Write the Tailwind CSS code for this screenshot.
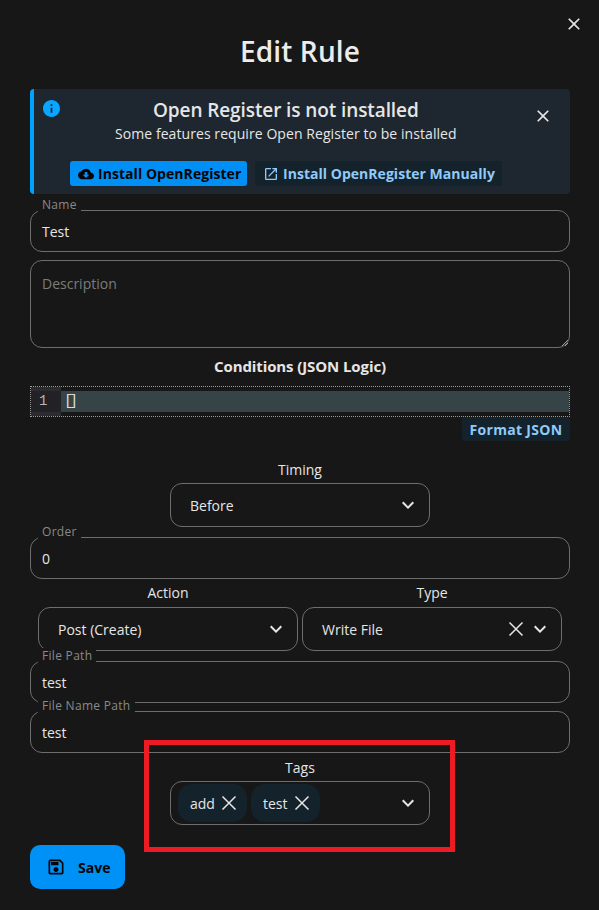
<!DOCTYPE html>
<html lang="en">
<head>
    <meta charset="UTF-8">
    <meta name="viewport" content="width=device-width, initial-scale=1.0">
    <title>Edit Rule</title>
    <script src="https://cdn.jsdelivr.net/npm/@tailwindcss/browser@4"></script>
</head>
<body class="bg-[#171717] text-[#e6e6e6] font-['Open_Sans',sans-serif] text-[14px]">
    <div class="relative w-[599px] h-[910px] overflow-hidden pl-[30px] pr-[29px]">
        <!-- dialog close -->
        <svg class="absolute left-[564px] top-[14px] w-[20px] h-[20px]" viewBox="0 0 24 24" fill="#e6e6e6"><path d="M19 6.41 17.59 5 12 10.59 6.41 5 5 6.41 10.59 12 5 17.59 6.41 19 12 13.41 17.59 19 19 17.59 13.41 12z"/></svg>

        <h1 class="h-[89px] pt-[30px] text-center text-[28px] leading-[42px] font-semibold text-[#ececec] tracking-[0.15px]">Edit Rule</h1>

        <!-- notice -->
        <div class="relative h-[105px] rounded-[4px] bg-[#1e2730] border-l-[4px] border-[#00a2ff]">
            <svg class="absolute left-[9px] top-[11px] w-[17px] h-[17px]" viewBox="2 2 20 20" fill="#0aa5ff"><path d="M12 2C6.48 2 2 6.48 2 12s4.48 10 10 10 10-4.48 10-10S17.52 2 12 2zm1 15h-2v-6h2v6zm0-8h-2V7h2v2z"/></svg>
            <div class="absolute left-[119px] top-[9px] text-[19px] leading-[24px] font-semibold text-[#e6e6e6] tracking-[-0.1px]">Open Register is not installed</div>
            <div class="absolute left-[81px] top-[35px] text-[14px] leading-[20px] tracking-[0.07px]">Some features require Open Register to be installed</div>
            <svg class="absolute left-[499px] top-[17px] w-[20px] h-[20px]" viewBox="0 0 24 24" fill="#e6e6e6"><path d="M19 6.41 17.59 5 12 10.59 6.41 5 5 6.41 10.59 12 5 17.59 6.41 19 12 13.41 17.59 19 19 17.59 13.41 12z"/></svg>
            <div class="absolute left-[36px] top-[72px] flex gap-[8px]">
                <div class="flex items-center h-[25px] w-[177px] pl-[8px] gap-[4px] rounded-[3px] bg-[#008ff5] text-[#050505] font-bold tracking-[0.05px]">
                    <svg class="w-[16px] h-[16px]" viewBox="0 0 24 24" fill="#050505"><path d="M19.35 10.04C18.67 6.59 15.64 4 12 4 9.11 4 6.6 5.64 5.35 8.04 2.34 8.36 0 10.91 0 14c0 3.31 2.69 6 6 6h13c2.76 0 5-2.24 5-5 0-2.64-2.05-4.78-4.65-4.96zM17 13l-5 5-5-5h3V9h4v4h3z"/></svg>
                    Install OpenRegister
                </div>
                <div class="flex items-center h-[25px] w-[247px] pl-[8px] gap-[4px] rounded-[3px] bg-[#14222c] text-[#90caf9] font-bold tracking-[0.03px]">
                    <svg class="w-[16px] h-[16px]" viewBox="0 0 24 24" fill="#90caf9"><path d="M19 19H5V5h7V3H5c-1.11 0-2 .9-2 2v14c0 1.1.89 2 2 2h14c1.1 0 2-.9 2-2v-7h-2v7zM14 3v2h3.59l-9.83 9.83 1.41 1.41L19 6.41V10h2V3h-7z"/></svg>
                    Install OpenRegister Manually
                </div>
            </div>
        </div>

        <!-- name -->
        <div class="relative mt-[16px] h-[42px] rounded-[12px] border border-[#6e6e6e] pl-[11px] flex items-center">
            <span class="absolute left-[7px] top-[-14px] px-[4px] bg-[#171717] text-[12px] leading-[16px] text-[#8a8a8a] tracking-[0.3px]">Name</span>
            Test
        </div>

        <!-- description -->
        <div class="relative mt-[8px] h-[88px] rounded-[12px] border border-[#6e6e6e] pl-[11px] pt-[13px] leading-[20px] text-[#7c7c7c]">
            Description
            <svg class="absolute right-[1px] bottom-[1px] w-[6px] h-[6px]" viewBox="0 0 6 6" stroke="#a0a0a0" fill="none"><path d="M0 6 6 0M3 6 6 3"/></svg>
        </div>

        <div class="mt-[8px] h-[20px] text-center text-[15px] font-bold leading-[20px] tracking-[-0.1px]">Conditions (JSON Logic)</div>

        <!-- editor -->
        <div class="mt-[10px] h-[31px] border border-dotted border-[#9a9a9a] flex">
            <div class="w-[30px] bg-[#2b2b30] flex flex-col">
                <div class="h-[4px]"></div>
                <div class="h-[21px] bg-[#212126] text-[#b8b8b8] font-['Liberation_Mono',monospace] text-[14px] leading-[21px] pl-[8px]">1</div>
            </div>
            <div class="flex-1 flex flex-col">
                <div class="mt-[4px] h-[21px] bg-[#364448] pl-[3px] text-[#dcdcdc] font-['Liberation_Mono',monospace] text-[15px] leading-[21px] tracking-[-4px]">[]</div>
            </div>
        </div>

        <div class="flex justify-end">
            <div class="h-[24px] w-[108px] rounded-[3px] bg-[#14222c] text-[#90caf9] font-bold flex items-center justify-center tracking-[0.3px]">Format JSON</div>
        </div>

        <!-- timing -->
        <div class="mt-[19px] h-[20px] text-center leading-[20px]">Timing</div>
        <div class="mx-auto mt-[3px] w-[260px] h-[44px] rounded-[12px] border border-[#6e6e6e] flex items-center pl-[19px] pr-[9px] justify-between">
            Before
            <svg class="w-[24px] h-[24px]" viewBox="0 0 24 24" fill="#e6e6e6"><path d="M7.41 8.59 12 13.17l4.59-4.58L18 10l-6 6-6-6z"/></svg>
        </div>

        <!-- order -->
        <div class="relative mt-[10px] h-[42px] rounded-[12px] border border-[#6e6e6e] pl-[11px] flex items-center">
            <span class="absolute left-[7px] top-[-14px] px-[4px] bg-[#171717] text-[12px] leading-[16px] text-[#8a8a8a] tracking-[0.3px]">Order</span>
            0
        </div>

        <!-- action and type -->
        <div class="mt-[4px] flex justify-center gap-[4px]">
            <div class="w-[260px]">
                <div class="h-[20px] text-center leading-[20px]">Action</div>
                <div class="mt-[4px] h-[44px] rounded-[12px] border border-[#6e6e6e] flex items-center pl-[19px] pr-[9px] justify-between">
                    Post (Create)
                    <svg class="w-[24px] h-[24px]" viewBox="0 0 24 24" fill="#e6e6e6"><path d="M7.41 8.59 12 13.17l4.59-4.58L18 10l-6 6-6-6z"/></svg>
                </div>
            </div>
            <div class="w-[260px]">
                <div class="h-[20px] text-center leading-[20px]">Type</div>
                <div class="mt-[4px] h-[44px] rounded-[12px] border border-[#6e6e6e] flex items-center pl-[19px] pr-[9px]">
                    <span class="flex-1">Write File</span>
                    <svg class="w-[24px] h-[24px]" viewBox="0 0 24 24" stroke="#e6e6e6" stroke-width="1.5" fill="none"><path d="M5.5 5.5 18.5 18.5M18.5 5.5 5.5 18.5"/></svg>
                    <svg class="w-[24px] h-[24px]" viewBox="0 0 24 24" fill="#e6e6e6"><path d="M7.41 8.59 12 13.17l4.59-4.58L18 10l-6 6-6-6z"/></svg>
                </div>
            </div>
        </div>

        <!-- file path -->
        <div class="relative mt-[10px] h-[42px] rounded-[12px] border border-[#6e6e6e] pl-[11px] flex items-center">
            <span class="absolute left-[7px] top-[-14px] px-[4px] bg-[#171717] text-[12px] leading-[16px] text-[#8a8a8a] tracking-[0.3px]">File Path</span>
            test
        </div>
        <div class="relative mt-[8px] h-[42px] rounded-[12px] border border-[#6e6e6e] pl-[11px] flex items-center">
            <span class="absolute left-[7px] top-[-14px] px-[4px] bg-[#171717] text-[12px] leading-[16px] text-[#8a8a8a] tracking-[0.3px]">File Name Path</span>
            test
        </div>

        <!-- tags -->
        <div class="mt-[5px] h-[20px] text-center leading-[20px]">Tags</div>
        <div class="mx-auto mt-[3px] w-[260px] h-[44px] rounded-[12px] border border-[#6e6e6e] flex items-center pl-[7px] pr-[9px] gap-[4px]">
            <div class="h-[38px] w-[69px] rounded-[14px] bg-[#14222c] flex items-center pl-[12px] gap-[2px]">
                add
                <svg class="w-[24px] h-[24px]" viewBox="0 0 24 24" stroke="#e6e6e6" stroke-width="1.5" fill="none"><path d="M5.5 5.5 18.5 18.5M18.5 5.5 5.5 18.5"/></svg>
            </div>
            <div class="h-[38px] w-[69px] rounded-[14px] bg-[#14222c] flex items-center pl-[12px] gap-[2px]">
                test
                <svg class="w-[24px] h-[24px]" viewBox="0 0 24 24" stroke="#e6e6e6" stroke-width="1.5" fill="none"><path d="M5.5 5.5 18.5 18.5M18.5 5.5 5.5 18.5"/></svg>
            </div>
            <svg class="ml-auto w-[24px] h-[24px]" viewBox="0 0 24 24" fill="#e6e6e6"><path d="M7.41 8.59 12 13.17l4.59-4.58L18 10l-6 6-6-6z"/></svg>
        </div>

        <!-- save -->
        <div class="mt-[20px] w-[95px] h-[44px] rounded-[10px] bg-[#0091f7] text-[#050505] font-bold flex items-center pl-[16px] gap-[12px]">
            <svg class="w-[20px] h-[20px]" viewBox="0 0 24 24" fill="#050505"><path d="M17 3H5c-1.11 0-2 .9-2 2v14c0 1.1.89 2 2 2h14c1.1 0 2-.9 2-2V7l-4-4zm2 16H5V5h11.17L19 7.83V19zm-7-7c-1.66 0-3 1.34-3 3s1.34 3 3 3 3-1.34 3-3-1.34-3-3-3zM6 6h9v4H6z"/></svg>
            Save
        </div>

        <!-- red annotation box -->
        <div class="absolute left-[144px] top-[740px] w-[311px] h-[112px] border-[5px] border-[#ed1c24]"></div>
    </div>
</body>
</html>
